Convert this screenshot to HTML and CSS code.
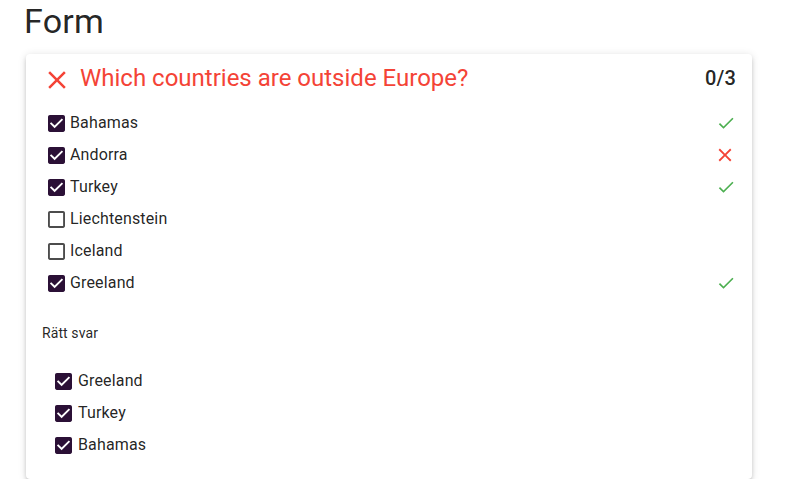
FILE: index.html
```html
<!DOCTYPE html>
<html lang="sv">
<head>
<meta charset="utf-8">
<title>Form</title>
<link rel="stylesheet" href="styles.css">
</head>
<body>
<div class="page">
  <h1 class="title">Form</h1>
  <div class="card">
    <div class="header">
      <svg class="head-icon" viewBox="0 0 24 24"><path d="M19 6.41 17.59 5 12 10.59 6.41 5 5 6.41 10.59 12 5 17.59 6.41 19 12 13.41 17.59 19 19 17.59 13.41 12z"/></svg>
      <div class="question">Which countries are outside Europe?</div>
      <div class="score">0/3</div>
    </div>
    <ul class="options">
      <li class="row">
        <svg class="cb checked" viewBox="3 3 18 18"><path d="M19 3H5c-1.11 0-2 .9-2 2v14c0 1.1.89 2 2 2h14c1.11 0 2-.9 2-2V5c0-1.1-.89-2-2-2zm-9 14l-5-5 1.41-1.41L10 14.17l7.59-7.59L19 8l-9 9z"/></svg>
        <span class="label">Bahamas</span>
        <svg class="mark ok" viewBox="0 0 24 24"><path d="M9 16.17 4.83 12l-1.42 1.41L9 19 21 7l-1.41-1.41z"/></svg>
      </li>
      <li class="row">
        <svg class="cb checked" viewBox="3 3 18 18"><path d="M19 3H5c-1.11 0-2 .9-2 2v14c0 1.1.89 2 2 2h14c1.11 0 2-.9 2-2V5c0-1.1-.89-2-2-2zm-9 14l-5-5 1.41-1.41L10 14.17l7.59-7.59L19 8l-9 9z"/></svg>
        <span class="label">Andorra</span>
        <svg class="mark bad" viewBox="0 0 24 24"><path d="M19 6.41 17.59 5 12 10.59 6.41 5 5 6.41 10.59 12 5 17.59 6.41 19 12 13.41 17.59 19 19 17.59 13.41 12z"/></svg>
      </li>
      <li class="row">
        <svg class="cb checked" viewBox="3 3 18 18"><path d="M19 3H5c-1.11 0-2 .9-2 2v14c0 1.1.89 2 2 2h14c1.11 0 2-.9 2-2V5c0-1.1-.89-2-2-2zm-9 14l-5-5 1.41-1.41L10 14.17l7.59-7.59L19 8l-9 9z"/></svg>
        <span class="label">Turkey</span>
        <svg class="mark ok" viewBox="0 0 24 24"><path d="M9 16.17 4.83 12l-1.42 1.41L9 19 21 7l-1.41-1.41z"/></svg>
      </li>
      <li class="row">
        <svg class="cb empty" viewBox="3 3 18 18"><path d="M19 5v14H5V5h14m0-2H5c-1.1 0-2 .9-2 2v14c0 1.1.9 2 2 2h14c1.1 0 2-.9 2-2V5c0-1.1-.9-2-2-2z"/></svg>
        <span class="label">Liechtenstein</span>
      </li>
      <li class="row">
        <svg class="cb empty" viewBox="3 3 18 18"><path d="M19 5v14H5V5h14m0-2H5c-1.1 0-2 .9-2 2v14c0 1.1.9 2 2 2h14c1.1 0 2-.9 2-2V5c0-1.1-.9-2-2-2z"/></svg>
        <span class="label">Iceland</span>
      </li>
      <li class="row">
        <svg class="cb checked" viewBox="3 3 18 18"><path d="M19 3H5c-1.11 0-2 .9-2 2v14c0 1.1.89 2 2 2h14c1.11 0 2-.9 2-2V5c0-1.1-.89-2-2-2zm-9 14l-5-5 1.41-1.41L10 14.17l7.59-7.59L19 8l-9 9z"/></svg>
        <span class="label">Greeland</span>
        <svg class="mark ok" viewBox="0 0 24 24"><path d="M9 16.17 4.83 12l-1.42 1.41L9 19 21 7l-1.41-1.41z"/></svg>
      </li>
    </ul>
    <div class="answer-title">Rätt svar</div>
    <ul class="answers">
      <li class="row">
        <svg class="cb checked" viewBox="3 3 18 18"><path d="M19 3H5c-1.11 0-2 .9-2 2v14c0 1.1.89 2 2 2h14c1.11 0 2-.9 2-2V5c0-1.1-.89-2-2-2zm-9 14l-5-5 1.41-1.41L10 14.17l7.59-7.59L19 8l-9 9z"/></svg>
        <span class="label">Greeland</span>
      </li>
      <li class="row">
        <svg class="cb checked" viewBox="3 3 18 18"><path d="M19 3H5c-1.11 0-2 .9-2 2v14c0 1.1.89 2 2 2h14c1.11 0 2-.9 2-2V5c0-1.1-.89-2-2-2zm-9 14l-5-5 1.41-1.41L10 14.17l7.59-7.59L19 8l-9 9z"/></svg>
        <span class="label">Turkey</span>
      </li>
      <li class="row">
        <svg class="cb checked" viewBox="3 3 18 18"><path d="M19 3H5c-1.11 0-2 .9-2 2v14c0 1.1.89 2 2 2h14c1.11 0 2-.9 2-2V5c0-1.1-.89-2-2-2zm-9 14l-5-5 1.41-1.41L10 14.17l7.59-7.59L19 8l-9 9z"/></svg>
        <span class="label">Bahamas</span>
      </li>
    </ul>
  </div>
</div>
</body>
</html>
```

FILE: styles.css
```css
* { box-sizing: border-box; }

html, body {
  margin: 0;
  padding: 0;
  background: #fff;
  font-family: Roboto, "Liberation Sans", Arial, sans-serif;
  color: rgba(0, 0, 0, 0.87);
}

.page {
  margin-left: 26px;
  width: 726px;
}

.title {
  margin: 0 0 12px -2px;
  font-size: 34px;
  font-weight: 400;
  line-height: 42px;
  letter-spacing: 0.25px;
}

.card {
  background: #fff;
  border-radius: 4px;
  box-shadow: 0 3px 3px -2px rgba(0,0,0,0.2), 0 3px 4px 0 rgba(0,0,0,0.14), 0 1px 8px 0 rgba(0,0,0,0.12);
  padding: 8px 16px 18px 16px;
}

.header {
  display: flex;
  align-items: flex-start;
  height: 32px;
}

.head-icon {
  width: 30px;
  height: 30px;
  margin-top: 3px;
  fill: #f44336;
  flex: none;
}

.question {
  margin-left: 8px;
  font-size: 24px;
  line-height: 32px;
  color: #f44336;
  flex: 1;
}

.score {
  font-size: 20px;
  font-weight: 500;
  line-height: 32px;
  letter-spacing: 0.15px;
}

.options, .answers {
  list-style: none;
  margin: 0;
  padding: 0;
}

.options {
  margin-top: 13px;
}

.row {
  display: flex;
  align-items: center;
  height: 32px;
}

.cb {
  width: 17px;
  height: 17px;
  flex: none;
  margin-left: 6px;
}

.cb.checked { fill: #2b1036; }
.cb.empty { fill: rgba(0, 0, 0, 0.7); }

.label {
  margin-left: 5px;
  font-size: 16px;
  line-height: 32px;
  letter-spacing: 0.15px;
  flex: 1;
}

.mark {
  flex: none;
}

.mark.ok {
  width: 20px;
  height: 20px;
  fill: #4caf50;
}

.mark.bad {
  width: 22px;
  height: 22px;
  fill: #f44336;
}

.answer-title {
  margin-top: 24px;
  font-size: 14px;
  line-height: 20px;
  letter-spacing: 0.1px;
}

.answers {
  margin-top: 22px;
}

.answers .cb {
  margin-left: 13px;
}

.answers .label {
  margin-left: 6px;
}
```
